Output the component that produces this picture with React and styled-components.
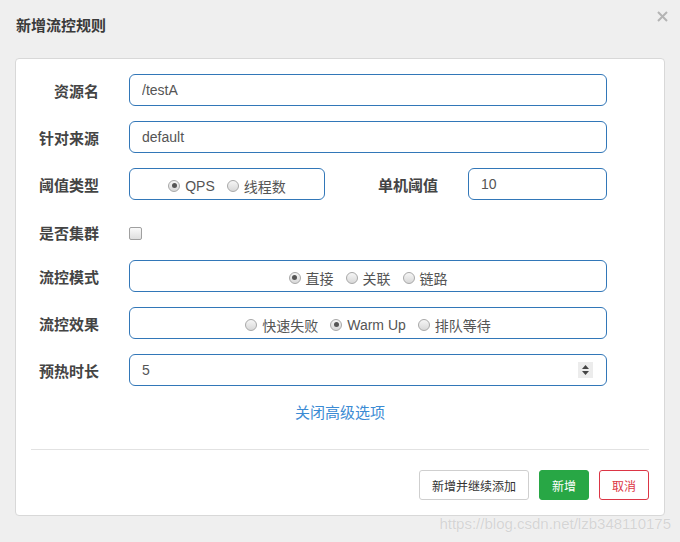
import React from "react"
import styled, { createGlobalStyle } from "styled-components"

const GlobalStyle = createGlobalStyle`
  html, body {
    margin: 0;
    padding: 0;
    background: #efefef;
  }
  * { box-sizing: border-box; }
`

const FONT = `"Liberation Sans", "Noto Sans CJK SC", sans-serif`

const rules = [
  { key: 'resource', label: '资源名', value: '/testA' },
  { key: 'origin', label: '针对来源', value: 'default' },
]

export default function App() {
  return (
    <Dialog>
      <GlobalStyle />
      <Header>
        <Title>新增流控规则</Title>
        <Close aria-label="close">
          <svg width="11" height="11" viewBox="0 0 11 11">
            <path d="M1 1 L10 10 M10 1 L1 10" stroke="#b4b4b4" strokeWidth="2" />
          </svg>
        </Close>
      </Header>

      <Panel>
        <Form>
          {rules.map((r) => (
            <Row key={r.key}>
              <Label>{r.label}</Label>
              <TextInput defaultValue={r.value} />
            </Row>
          ))}

          <Row>
            <Label>阈值类型</Label>
            <Field>
              <RadioBox width="196px">
                <Radio checked label="QPS" />
                <Radio label="线程数" />
              </RadioBox>
              <SubLabel>单机阈值</SubLabel>
              <TextInput defaultValue="10" width="139px" />
            </Field>
          </Row>

          <CheckRow>
            <Label>是否集群</Label>
            <Check />
          </CheckRow>

          <Row>
            <Label>流控模式</Label>
            <RadioBox>
              <Radio checked label="直接" />
              <Radio label="关联" />
              <Radio label="链路" />
            </RadioBox>
          </Row>

          <Row>
            <Label>流控效果</Label>
            <RadioBox>
              <Radio label="快速失败" />
              <Radio checked label="Warm Up" />
              <Radio label="排队等待" />
            </RadioBox>
          </Row>

          <Row>
            <Label>预热时长</Label>
            <NumberBox>
              <NumberValue>5</NumberValue>
              <Spinner>
                <svg width="9" height="12" viewBox="0 0 9 12">
                  <path d="M4.5 1 L8 5 L1 5 Z M1 7 L8 7 L4.5 11 Z" fill="#444" />
                </svg>
              </Spinner>
            </NumberBox>
          </Row>

          <LinkRow>
            <ToggleLink href="#">关闭高级选项</ToggleLink>
          </LinkRow>
        </Form>

        <Divider />

        <Footer>
          <Button variant="default">新增并继续添加</Button>
          <Button variant="success">新增</Button>
          <Button variant="danger">取消</Button>
        </Footer>
      </Panel>

      <Watermark>https://blog.csdn.net/lzb348110175</Watermark>
    </Dialog>
  )
}

const Radio = ({ checked, label }) => (
  <RadioItem>
    <RadioDot checked={checked} />
    <span>{label}</span>
  </RadioItem>
)

const Dialog = styled.div`
  position: relative;
  width: 680px;
  height: 542px;
  background: #efefef;
  font-family: ${FONT};
  padding: 0 15px;
  overflow: hidden;
`

const Header = styled.div`
  display: flex;
  align-items: flex-start;
  justify-content: space-between;
  height: 58px;
  padding-top: 15px;
`

const Title = styled.h4`
  margin: 0;
  margin-left: 1px;
  font-size: 15px;
  line-height: 22px;
  font-weight: bold;
  color: #3a3a3a;
`

const Close = styled.span`
  display: flex;
  margin-top: -4px;
  margin-right: -3px;
`

const Panel = styled.div`
  background: #fff;
  border: 1px solid #d8d8d8;
  border-radius: 4px;
  padding: 15px;
  height: 458px;
`

const Form = styled.div`
  width: 576px;
  display: flex;
  flex-direction: column;
  gap: 15px;
`

const Row = styled.div`
  display: flex;
  align-items: center;
  gap: 30px;
  height: 32px;
`

const CheckRow = styled(Row)`
  height: 30px;
  align-items: flex-end;
`

const Label = styled.label`
  width: 68px;
  flex: none;
  text-align: right;
  font-size: 15px;
  line-height: 22px;
  font-weight: bold;
  color: #444;
  padding-top: 3px;
`

const SubLabel = styled(Label)`
  flex: 1;
  width: auto;
  margin-right: 30px;
`

const Field = styled.div`
  flex: 1;
  display: flex;
  align-items: center;
  height: 32px;
`

const TextInput = styled.input`
  width: ${({ width }) => width || 'auto'};
  flex: ${({ width }) => (width ? 'none' : '1')};
  height: 32px;
  border: 1px solid #3277b8;
  border-radius: 6px;
  padding: 0 12px;
  font-family: ${FONT};
  font-size: 14px;
  color: #555;
  outline: none;
  background: #fff;
`

const RadioBox = styled.div`
  width: ${({ width }) => width || 'auto'};
  flex: ${({ width }) => (width ? 'none' : '1')};
  height: 32px;
  border: 1px solid #3277b8;
  border-radius: 6px;
  display: flex;
  align-items: center;
  justify-content: center;
  gap: 12px;
  padding-top: 3px;
`

const RadioItem = styled.span`
  display: inline-flex;
  align-items: center;
  gap: 5px;
  font-size: 14px;
  color: #555;
`

const RadioDot = styled.span`
  width: 12px;
  height: 12px;
  border-radius: 50%;
  border: 1px solid #a8a8a8;
  background: linear-gradient(#f6f6f6, #d8d8d8);
  display: inline-flex;
  align-items: center;
  justify-content: center;
  &::after {
    content: '';
    width: 5px;
    height: 5px;
    border-radius: 50%;
    background: ${({ checked }) => (checked ? '#555' : 'transparent')};
  }
`

const Check = styled.span`
  width: 13px;
  height: 13px;
  border: 1px solid #a0a0a0;
  border-radius: 2px;
  background: linear-gradient(#fafafa, #dedede);
  margin-bottom: 5px;
`

const NumberBox = styled.div`
  flex: 1;
  height: 32px;
  border: 1px solid #3277b8;
  border-radius: 6px;
  display: flex;
  align-items: center;
  justify-content: space-between;
  padding: 0 13px 0 12px;
`

const NumberValue = styled.span`
  font-size: 14px;
  color: #555;
`

const Spinner = styled.span`
  width: 15px;
  height: 16px;
  background: #ececec;
  display: flex;
  align-items: center;
  justify-content: center;
`

const LinkRow = styled.div`
  display: flex;
  justify-content: center;
  padding-left: 42px;
  margin-top: 2px;
`

const ToggleLink = styled.a`
  font-size: 15px;
  line-height: 20px;
  color: #3b8bd4;
  text-decoration: none;
`

const Divider = styled.hr`
  border: 0;
  border-top: 1px solid #e2e2e2;
  margin: 26px 0 20px;
`

const Footer = styled.div`
  display: flex;
  justify-content: flex-end;
  gap: 10px;
`

const variants = {
  default: { bg: '#fff', border: '#cfcfcf', color: '#333' },
  success: { bg: '#28a745', border: '#28a745', color: '#fff' },
  danger: { bg: '#fff', border: '#dc3545', color: '#dc3545' },
}

const Button = styled.button`
  height: 30px;
  padding: 0 12px;
  border-radius: 3px;
  font-family: ${FONT};
  font-size: 12px;
  background: ${({ variant }) => variants[variant].bg};
  border: 1px solid ${({ variant }) => variants[variant].border};
  color: ${({ variant }) => variants[variant].color};
  cursor: pointer;
`

const Watermark = styled.div`
  position: absolute;
  right: 9px;
  bottom: 10px;
  font-family: "Liberation Sans", Arial, sans-serif;
  font-size: 15px;
  color: rgba(200, 200, 200, 0.75);
  text-shadow: 0 0 1px rgba(255, 255, 255, 0.9);
  pointer-events: none;
`
